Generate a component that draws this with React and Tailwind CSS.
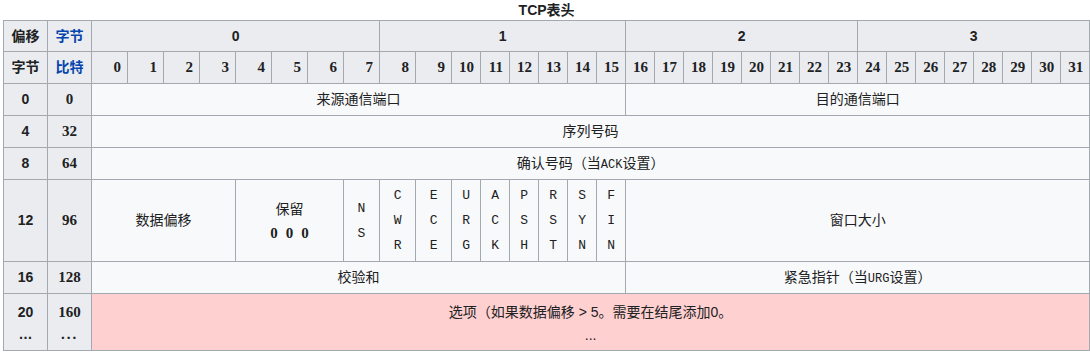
const bits = Array.from({ length: 32 }, (_, i) => i);

const flags = [
  ['C', 'W', 'R'],
  ['E', 'C', 'E'],
  ['U', 'R', 'G'],
  ['A', 'C', 'K'],
  ['P', 'S', 'H'],
  ['R', 'S', 'T'],
  ['S', 'Y', 'N'],
  ['F', 'I', 'N'],
];

const cell = 'border border-[#a2a9b1] text-center align-middle p-0';
const head = `${cell} bg-[#eaecf0] font-bold`;
const body = `${cell} bg-[#f8f9fa]`;
const serifNum = "font-['Liberation_Serif',serif] font-bold text-[15px]";
const mono = "font-['Liberation_Mono',monospace]";

const RowHead = ({ byte, bit, h }) => (
  <>
    <th className={`${head} ${h}`}>{byte}</th>
    <th className={`${head} ${serifNum} font-bold`}>{bit}</th>
  </>
);

export default function App() {
  return (
    <div className="bg-white w-[1090px] h-[354px] pl-[3px] text-[#202122] font-['Liberation_Sans','Noto_Sans_CJK_SC',sans-serif] text-[14px]">
      <table className="table-fixed border-collapse w-[1086px]">
        <caption className="font-bold h-[20px] leading-[20px] text-[14px]">TCP表头</caption>
        <colgroup>
          <col className="w-[44px]" />
          <col className="w-[44px]" />
          {bits.map((b) => (
            <col key={b} className={b < 10 ? 'w-[36px]' : 'w-[29px]'} />
          ))}
        </colgroup>
        <tbody>
          <tr>
            <th className={`${head} h-[31px]`}>偏移</th>
            <th className={`${head} text-[#0645ad]`}>字节</th>
            <th colSpan={8} className={head}>0</th>
            <th colSpan={8} className={head}>1</th>
            <th colSpan={8} className={head}>2</th>
            <th colSpan={8} className={head}>3</th>
          </tr>
          <tr>
            <th className={`${head} h-[32px]`}>字节</th>
            <th className={`${head} text-[#0645ad]`}>比特</th>
            {bits.map((b) => (
              <th key={b} className={`${head} ${serifNum} text-right pr-[6px]`}>
                {b}
              </th>
            ))}
          </tr>
          <tr>
            <RowHead byte="0" bit="0" h="h-[32px]" />
            <td colSpan={16} className={body}>来源通信端口</td>
            <td colSpan={16} className={body}>目的通信端口</td>
          </tr>
          <tr>
            <RowHead byte="4" bit="32" h="h-[32px]" />
            <td colSpan={32} className={body}>序列号码</td>
          </tr>
          <tr>
            <RowHead byte="8" bit="64" h="h-[32px]" />
            <td colSpan={32} className={body}>
              确认号码（当<span className={`${mono} text-[12px]`}>ACK</span>设置）
            </td>
          </tr>
          <tr>
            <RowHead byte="12" bit="96" h="h-[82px]" />
            <td colSpan={4} className={body}>数据偏移</td>
            <td colSpan={3} className={body}>
              <div className="leading-[24px]">保留</div>
              <div className={`${serifNum} leading-[24px] flex justify-center gap-[8px]`}>
                <span>0</span>
                <span>0</span>
                <span>0</span>
              </div>
            </td>
            <td className={`${body} ${mono} text-[13px] leading-[25px]`}>
              <div>N</div>
              <div>S</div>
            </td>
            {flags.map((f, i) => (
              <td key={i} className={`${body} ${mono} text-[13px] leading-[25px]`}>
                {f.map((c, j) => (
                  <div key={j}>{c}</div>
                ))}
              </td>
            ))}
            <td colSpan={16} className={body}>窗口大小</td>
          </tr>
          <tr>
            <RowHead byte="16" bit="128" h="h-[32px]" />
            <td colSpan={16} className={body}>校验和</td>
            <td colSpan={16} className={body}>
              紧急指针（当<span className={`${mono} text-[12px]`}>URG</span>设置）
            </td>
          </tr>
          <tr>
            <th className={`${head} h-[57px] leading-[24px]`}>
              <div>20</div>
              <div className="leading-[20px]">…</div>
            </th>
            <th className={`${head} ${serifNum} leading-[24px]`}>
              <div>160</div>
              <div className="leading-[20px] tracking-[2px]">...</div>
            </th>
            <td colSpan={32} className={`${cell} bg-[#ffd0d0] leading-[26px]`}>
              <div>选项（如果数据偏移 &gt; 5。需要在结尾添加0。</div>
              <div className="leading-[20px]">...</div>
            </td>
          </tr>
        </tbody>
      </table>
    </div>
  );
}
